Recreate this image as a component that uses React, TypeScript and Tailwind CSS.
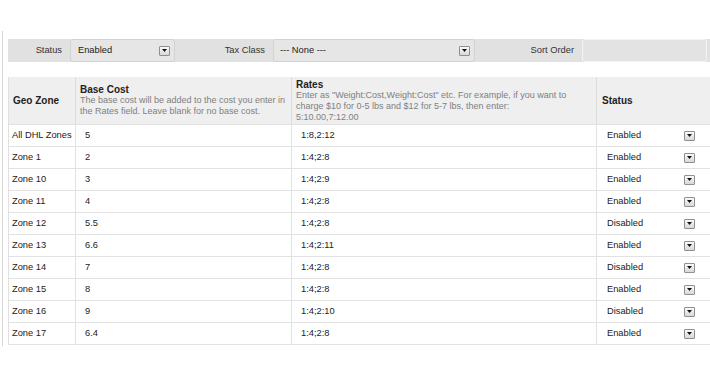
import React from "react";

const rows: [string, string, string, string][] = [
  ["All DHL Zones", "5", "1:8,2:12", "Enabled"],
  ["Zone 1", "2", "1:4;2:8", "Enabled"],
  ["Zone 10", "3", "1:4;2:9", "Enabled"],
  ["Zone 11", "4", "1:4;2:8", "Enabled"],
  ["Zone 12", "5.5", "1:4;2:8", "Disabled"],
  ["Zone 13", "6.6", "1:4;2:11", "Enabled"],
  ["Zone 14", "7", "1:4;2:8", "Disabled"],
  ["Zone 15", "8", "1:4;2:8", "Enabled"],
  ["Zone 16", "9", "1:4;2:10", "Disabled"],
  ["Zone 17", "6.4", "1:4;2:8", "Enabled"],
];

function Arrow() {
  return (
    <span className="flex h-[10px] w-[11px] items-center justify-center rounded-[1px] border border-[#8f8f8f] bg-gradient-to-b from-[#fafafa] to-[#d8d8d8]">
      <svg width="5" height="3" viewBox="0 0 5 3">
        <path d="M0 0 L5 0 L2.5 3 Z" fill="#111" />
      </svg>
    </span>
  );
}

export default function App() {
  return (
    <div
      className="h-[380px] w-[710px] overflow-hidden bg-white text-[9.3px] leading-[11px] text-[#222]"
      style={{ fontFamily: '"Liberation Sans", Arial, sans-serif' }}
    >
      <div className="ml-[2px] mt-[31px] h-[315px] border-l border-[#d6d6d6] pl-[5px] pt-[8px]">
        {/* filter bar */}
        <div className="flex h-[23px] items-center bg-[#e1e1e1]">
          <span className="w-[54px] text-right text-[#333]">Status</span>
          <div className="ml-[8px] flex h-[23px] w-[105px] items-center justify-between rounded-[3px] border border-[#d2d2d2] bg-[#e6e6e6] pl-[7px] pr-[4px]">
            <span>Enabled</span>
            <Arrow />
          </div>
          <span className="w-[90px] text-right text-[#333]">Tax Class</span>
          <div className="ml-[8px] flex h-[23px] w-[202px] items-center justify-between rounded-[3px] border border-[#d2d2d2] bg-[#e6e6e6] pl-[6px] pr-[4px]">
            <span>--- None ---</span>
            <Arrow />
          </div>
          <span className="w-[99px] text-right text-[#333]">Sort Order</span>
          <div className="ml-[8px] h-[23px] w-[125px] rounded-[3px] border border-[#f4f4f4] bg-[#e3e3e3]" />
        </div>

        {/* table */}
        <div className="mt-[15px] grid grid-cols-[66px_216px_305px_1fr] border-l border-[#e0e0e0]">
          <div className="flex h-[47px] items-center bg-[#efefef] pl-[4px] text-[10px] font-bold text-[#222]">
            Geo Zone
          </div>
          <div className="flex h-[47px] flex-col justify-center whitespace-nowrap border-l border-[#dcdcdc] bg-[#efefef] pl-[4px]">
            <span className="text-[10px] font-bold">Base Cost</span>
            <span className="text-[9px] text-[#808080]">
              The base cost will be added to the cost you enter in
              <br />
              the Rates field. Leave blank for no base cost.
            </span>
          </div>
          <div className="flex h-[47px] flex-col justify-center whitespace-nowrap border-l border-[#dcdcdc] bg-[#efefef] pl-[4px]">
            <span className="text-[10px] font-bold">Rates</span>
            <span className="text-[9px] text-[#808080]">
              Enter as "Weight:Cost,Weight:Cost" etc. For example, if you want to
              <br />
              charge $10 for 0-5 lbs and $12 for 5-7 lbs, then enter:
              <br />
              5:10.00,7:12.00
            </span>
          </div>
          <div className="flex h-[47px] items-center border-l border-[#dcdcdc] bg-[#efefef] pl-[5px] text-[10px] font-bold">
            Status
          </div>

          {rows.map(([zone, cost, rate, status]) => (
            <React.Fragment key={zone}>
              <div className="flex h-[22px] items-center border-t border-[#e2e2e2] pl-[3px]">{zone}</div>
              <div className="flex h-[22px] items-center border-l border-t border-[#e2e2e2] pl-[9px]">{cost}</div>
              <div className="flex h-[22px] items-center border-l border-t border-[#e2e2e2] pl-[9px]">{rate}</div>
              <div className="flex h-[22px] items-center border-l border-t border-[#e2e2e2] pl-[10px]">
                <span className="w-[77px]">{status}</span>
                <Arrow />
              </div>
            </React.Fragment>
          ))}
          <div className="col-span-4 border-t border-[#e2e2e2]" />
        </div>
      </div>
    </div>
  );
}
